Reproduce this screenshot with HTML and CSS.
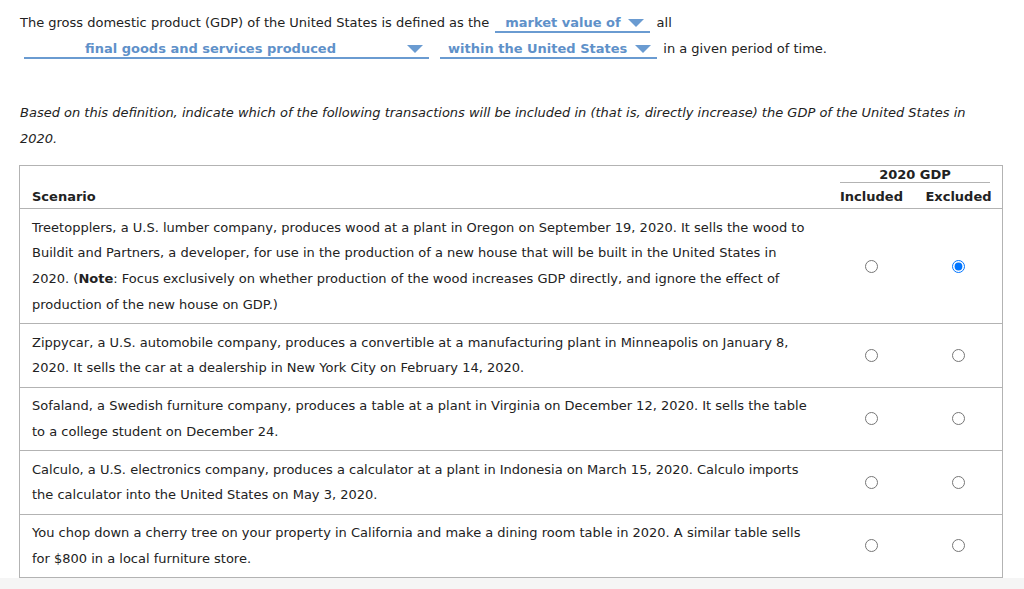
FILE: index.html
```html
<!DOCTYPE html>
<html>
<head>
<meta charset="utf-8">
<link rel="stylesheet" href="styles.css">
</head>
<body>
<div class="page">
  <div class="def">
    <div class="line">The gross domestic product (GDP) of the United States is defined as the <span class="dd dd-market"><span class="dd-text">market value of</span><span class="arrow"></span></span> all</div>
    <div class="line"><span class="dd dd-final"><span class="dd-text">final goods and services produced</span><span class="arrow"></span></span> <span class="dd dd-within"><span class="dd-text">within the United States</span><span class="arrow"></span></span> in a given period of time.</div>
  </div>
  <p class="prompt">Based on this definition, indicate which of the following transactions will be included in (that is, directly increase) the GDP of the United States in 2020.</p>
  <div class="table">
    <div class="thead">
      <div class="gdp-title">2020 GDP</div>
      <div class="th-scenario">Scenario</div>
      <div class="th-col">Included</div>
      <div class="th-col">Excluded</div>
    </div>
    <div class="row">
      <div class="scenario">Treetopplers, a U.S. lumber company, produces wood at a plant in Oregon on September 19, 2020. It sells the wood to<br>Buildit and Partners, a developer, for use in the production of a new house that will be built in the United States in<br>2020. (<b>Note</b>: Focus exclusively on whether production of the wood increases GDP directly, and ignore the effect of<br>production of the new house on GDP.)</div>
      <div class="cell"><input type="radio" name="r1"></div>
      <div class="cell"><input type="radio" name="r1" checked></div>
    </div>
    <div class="row">
      <div class="scenario">Zippycar, a U.S. automobile company, produces a convertible at a manufacturing plant in Minneapolis on January 8,<br>2020. It sells the car at a dealership in New York City on February 14, 2020.</div>
      <div class="cell"><input type="radio" name="r2"></div>
      <div class="cell"><input type="radio" name="r2"></div>
    </div>
    <div class="row">
      <div class="scenario">Sofaland, a Swedish furniture company, produces a table at a plant in Virginia on December 12, 2020. It sells the table<br>to a college student on December 24.</div>
      <div class="cell"><input type="radio" name="r3"></div>
      <div class="cell"><input type="radio" name="r3"></div>
    </div>
    <div class="row">
      <div class="scenario">Calculo, a U.S. electronics company, produces a calculator at a plant in Indonesia on March 15, 2020. Calculo imports<br>the calculator into the United States on May 3, 2020.</div>
      <div class="cell"><input type="radio" name="r4"></div>
      <div class="cell"><input type="radio" name="r4"></div>
    </div>
    <div class="row">
      <div class="scenario">You chop down a cherry tree on your property in California and make a dining room table in 2020. A similar table sells<br>for $800 in a local furniture store.</div>
      <div class="cell"><input type="radio" name="r5"></div>
      <div class="cell"><input type="radio" name="r5"></div>
    </div>
  </div>
</div>
</body>
</html>
```
FILE: styles.css
```css
html, body {
  margin: 0;
  padding: 0;
  background: #f5f5f5;
}
body {
  font-family: Verdana, "DejaVu Sans", sans-serif;
  font-size: 13px;
  color: #222;
}
.page {
  background: #fff;
  padding: 10px 21px 0 19px;
  height: 568px;
}
.def {
  padding-left: 1px;
}
.line {
  line-height: 26px;
  white-space: nowrap;
}
.dd {
  display: inline-flex;
  align-items: center;
  border-bottom: 2px solid #6a9bd1;
  color: #5f91c9;
  font-weight: bold;
  line-height: 16px;
  margin: 0 2px;
}
.dd-text {
  flex: 1;
  text-align: center;
}
.arrow {
  width: 0;
  height: 0;
  border-left: 8px solid transparent;
  border-right: 8px solid transparent;
  border-top: 8px solid #6a9bd1;
  margin-right: 6px;
}
.dd-market { width: 155px; }
.dd-market .dd-text { padding-left: 2px; }
.dd-final { width: 405px; margin-left: 4px; }
.dd-final .dd-text { padding-right: 10px; }
.dd-within { width: 217px; margin-left: 5px; }
.prompt {
  margin: 38px 0 0 1px;
  font-style: italic;
  line-height: 26px;
}
.table {
  margin-top: 13px;
  border: 1px solid #b3b3b3;
}
.thead {
  display: grid;
  grid-template-columns: 1fr 87px 87px;
  border-bottom: 1px solid #b3b3b3;
  font-weight: bold;
}
.gdp-title {
  grid-column: 2 / 4;
  grid-row: 1;
  margin: 0 12px;
  padding-top: 1px;
  text-align: center;
  line-height: 15px;
  border-bottom: 1px solid #b3b3b3;
}
.th-scenario {
  grid-column: 1;
  grid-row: 2;
  padding: 3px 0 0 12px;
  line-height: 22px;
}
.th-col {
  grid-row: 2;
  padding: 3px 0 0;
  line-height: 22px;
  text-align: center;
}
.row {
  display: flex;
  align-items: center;
  border-top: 1px solid #b3b3b3;
}
.thead + .row { border-top: none; }
.scenario {
  flex: 1;
  padding: 5.5px 0 5.5px 12px;
  line-height: 25.75px;
  white-space: nowrap;
}
.cell {
  width: 87px;
  display: flex;
  justify-content: center;
}
.cell input {
  margin: 0;
  width: 13px;
  height: 13px;
}
```
